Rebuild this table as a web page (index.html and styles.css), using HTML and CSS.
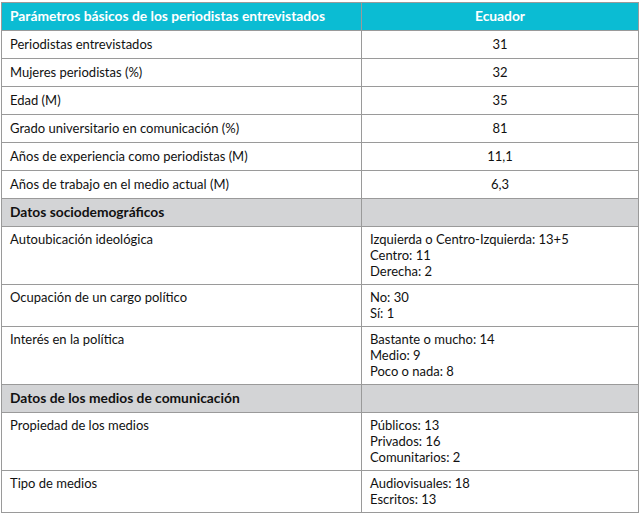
FILE: index.html
```html
<!DOCTYPE html>
<html lang="es">
<head>
    <meta charset="UTF-8" />
    <meta name="viewport" content="width=device-width, initial-scale=1.0" />
    <title>Parámetros básicos de los periodistas entrevistados</title>
    <link rel="stylesheet" href="styles.css">
</head>
<body>
<table class="data-table">
    <thead>
        <tr>
            <th class="label">Parámetros básicos de los periodistas entrevistados</th>
            <th class="value">Ecuador</th>
        </tr>
    </thead>
    <tbody>
        <tr class="single"><td>Periodistas entrevistados</td><td class="value">31</td></tr>
        <tr class="single"><td>Mujeres periodistas (%)</td><td class="value">32</td></tr>
        <tr class="single"><td>Edad (M)</td><td class="value">35</td></tr>
        <tr class="single"><td>Grado universitario en comunicación (%)</td><td class="value">81</td></tr>
        <tr class="single"><td>Años de experiencia como periodistas (M)</td><td class="value">11,1</td></tr>
        <tr class="single"><td>Años de trabajo en el medio actual (M)</td><td class="value">6,3</td></tr>

        <!-- Section: socio-demographics -->
        <tr class="section single"><td>Datos sociodemográficos</td><td></td></tr>
        <tr>
            <td>Autoubicación ideológica</td>
            <td>Izquierda o Centro-Izquierda: 13+5<br>Centro: 11<br>Derecha: 2</td>
        </tr>
        <tr>
            <td>Ocupación de un cargo político</td>
            <td>No: 30<br>Sí: 1</td>
        </tr>
        <tr>
            <td>Interés en la política</td>
            <td>Bastante o mucho: 14<br>Medio: 9<br>Poco o nada: 8</td>
        </tr>

        <!-- Section: media -->
        <tr class="section single"><td>Datos de los medios de comunicación</td><td></td></tr>
        <tr>
            <td>Propiedad de los medios</td>
            <td>Públicos: 13<br>Privados: 16<br>Comunitarios: 2</td>
        </tr>
        <tr>
            <td>Tipo de medios</td>
            <td>Audiovisuales: 18<br>Escritos: 13</td>
        </tr>
    </tbody>
</table>
</body>
</html>
```

FILE: styles.css
```css
body {
    margin: 0;
    font-family: 'Lato', 'Liberation Sans', sans-serif;
    background: #fff;
    color: #111;
}
.data-table {
    margin: 2px 0 0 1px;
    width: 638px;
    border-collapse: collapse;
    font-size: 13px;
    table-layout: fixed;
}
.data-table th,
.data-table td {
    border: 1px solid #9a9a9a;
    padding: 4px 8px 5px;
    line-height: 16px;
    text-align: left;
    vertical-align: top;
}
.data-table th:first-child,
.data-table td:first-child {
    width: 343px;
}
/* Teal header */
.data-table thead th {
    background: #0bbcd3;
    color: #fff;
    font-weight: bold;
    font-size: 13.8px;
    height: 18px;
    vertical-align: middle;
}
.data-table th.value,
.data-table td.value {
    text-align: center;
}
.single td {
    height: 18px;
    vertical-align: middle;
}
/* Grey section rows */
.section td {
    background: #d3d4d6;
    font-weight: bold;
    font-size: 13.8px;
}
```
